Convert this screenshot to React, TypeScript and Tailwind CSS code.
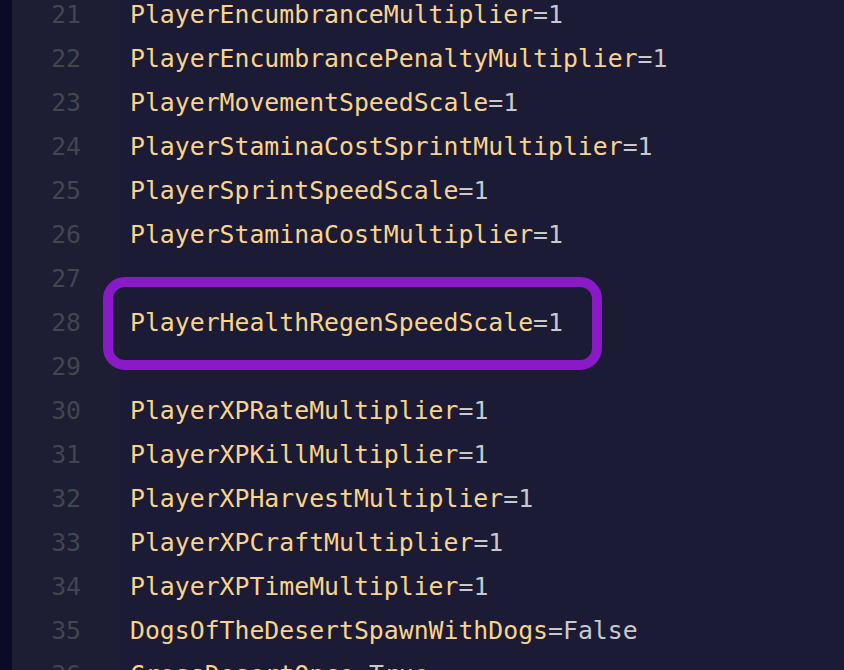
const lines: { n: number; key?: string; value?: string }[] = [
  { n: 21, key: "PlayerEncumbranceMultiplier", value: "1" },
  { n: 22, key: "PlayerEncumbrancePenaltyMultiplier", value: "1" },
  { n: 23, key: "PlayerMovementSpeedScale", value: "1" },
  { n: 24, key: "PlayerStaminaCostSprintMultiplier", value: "1" },
  { n: 25, key: "PlayerSprintSpeedScale", value: "1" },
  { n: 26, key: "PlayerStaminaCostMultiplier", value: "1" },
  { n: 27 },
  { n: 28, key: "PlayerHealthRegenSpeedScale", value: "1" },
  { n: 29 },
  { n: 30, key: "PlayerXPRateMultiplier", value: "1" },
  { n: 31, key: "PlayerXPKillMultiplier", value: "1" },
  { n: 32, key: "PlayerXPHarvestMultiplier", value: "1" },
  { n: 33, key: "PlayerXPCraftMultiplier", value: "1" },
  { n: 34, key: "PlayerXPTimeMultiplier", value: "1" },
  { n: 35, key: "DogsOfTheDesertSpawnWithDogs", value: "False" },
  { n: 36, key: "CrossDesertOnce", value: "True" },
];

export default function App() {
  return (
    <div
      className="w-[844px] h-[670px] overflow-hidden flex bg-[#1b1b36] text-[24.8px] leading-[44px]"
      style={{ fontFamily: '"DejaVu Sans Mono", monospace' }}
    >
      <div className="w-[12px] shrink-0 bg-[#0b0b27]" />
      <div className="w-[108px] shrink-0 bg-[#1d1e33]">
        <div className="-mt-[7px] pr-[39px] text-right text-[#43454f]">
          {lines.map((l) => (
            <div key={l.n}>{l.n}</div>
          ))}
        </div>
      </div>
      <div className="relative flex-1 pl-[10px]">
        <div className="-mt-[7px]">
          {lines.map((l) => (
            <div key={l.n} className="h-[44px] whitespace-pre">
              {l.key && (
                <>
                  <span className="text-[#f9d48a]">{l.key}</span>
                  <span className="text-[#c9c9cc]">={l.value}</span>
                </>
              )}
            </div>
          ))}
        </div>
        <div className="absolute left-[-17px] top-[277px] w-[499px] h-[93px] rounded-[22px] border-[10px] border-[#8a1ac7]" />
      </div>
    </div>
  );
}
